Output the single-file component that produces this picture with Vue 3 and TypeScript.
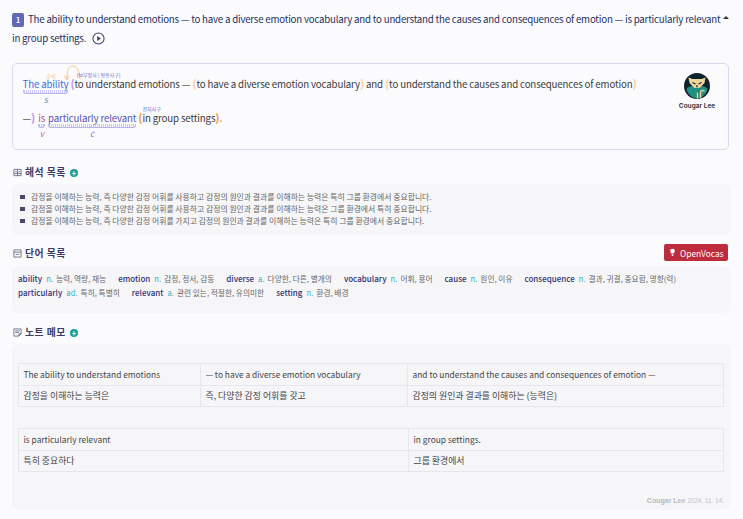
<script setup lang="ts">
const meanings: string[] = [
  '감정을 이해하는 능력, 즉 다양한 감정 어휘를 사용하고 감정의 원인과 결과를 이해하는 능력은 특히 그룹 환경에서 중요합니다.',
  '감정을 이해하는 능력, 즉 다양한 감정 어휘를 사용하고 감정의 원인과 결과를 이해하는 능력은 그룹 환경에서 특히 중요합니다.',
  '감정을 이해하는 능력, 즉 다양한 감정 어휘를 가지고 감정의 원인과 결과를 이해하는 능력은 특히 그룹 환경에서 중요합니다.',
]
interface Word { w: string; p: string; m: string }
const words: Word[] = [
  { w: 'ability', p: 'n.', m: '능력, 역량, 재능' },
  { w: 'emotion', p: 'n.', m: '감정, 정서, 감동' },
  { w: 'diverse', p: 'a.', m: '다양한, 다른, 별개의' },
  { w: 'vocabulary', p: 'n.', m: '어휘, 용어' },
  { w: 'cause', p: 'n.', m: '원인, 이유' },
  { w: 'consequence', p: 'n.', m: '결과, 귀결, 중요함, 영향(력)' },
  { w: 'particularly', p: 'ad.', m: '특히, 특별히' },
  { w: 'relevant', p: 'a.', m: '관련 있는, 적절한, 유의미한' },
  { w: 'setting', p: 'n.', m: '환경, 배경' },
]
</script>

<template>
  <div class="page">
    <header class="title">
      <p class="title-text">
        <span class="num">1</span>The ability to understand emotions — to have a diverse emotion vocabulary and to understand the causes and consequences of emotion — is particularly relevant in group settings.
        <svg class="play" viewBox="0 0 14 14" width="13" height="13"><circle cx="7" cy="7" r="6" fill="none" stroke="#3d4066" stroke-width="1.1" /><path d="M5.6 4.4 9.6 7l-4 2.6z" fill="#3d4066" /></svg>
      </p>
      <span class="caret"></span>
    </header>

    <section class="sentence">
      <div class="analysis">
        <span class="chunk subject">The ability<i class="role blue">S</i><em class="tag mod">수식</em>
          <svg class="arc" viewBox="0 0 18 18" width="18" height="18"><path d="M16 14C16 5 12 1 8.500 1 5 1 3 5 3 13" fill="none" stroke="#f8c58c" stroke-width="1" /><path d="M.5 10.500 3 15 5.500 10.500" fill="none" stroke="#f8c58c" stroke-width="1" /></svg>
        </span>
        <span class="br violet first">(</span><span class="tagged">to<em class="tag info">[to부정사 | 형용사구]</em></span> understand emotions — <span class="br peach">(</span>to have a diverse emotion vocabulary<span class="br peach">)</span> and <span class="br peach">(</span>to understand the causes and consequences of emotion<span class="br peach">)</span><br />
        —<span class="br violet">)</span> <span class="chunk verb">is<i class="role pink">V</i></span> <span class="chunk comp">particularly relevant<i class="role indigo">C</i></span> <span class="br orange">(</span><span class="tagged">in<em class="tag prep">전치사구</em></span> group settings<span class="br orange">)</span><span class="dot">.</span>
      </div>
      <div class="author">
        <svg class="avatar" viewBox="0 0 26 26" width="26" height="26">
          <circle cx="13" cy="13" r="13" fill="#0e2330" />
          <path d="M2.500 16C6 11 20 11 23.500 16 22 22 17 25.500 13 25.500 9 25.500 4 22 2.500 16z" fill="#1f8f80" />
          <path d="M4.500 4.500 8.500 6h9l4-1.500-1 5.500L15.500 15h-5L5.500 10z" fill="#f3d49a" />
          <path d="M8.500 9.500l3 1.500M17.500 9.500l-3 1.500M13 12v2.500" stroke="#0e2330" stroke-width="1.100" fill="none" />
          <path d="M16.500 25v-5.500c0-2 3-3 4-1M13.500 25.500v-6" stroke="#f3d49a" stroke-width="1.400" fill="none" />
        </svg>
        <span class="author-name">Cougar Lee</span>
      </div>
    </section>

    <div class="head">
      <svg viewBox="0 0 10 10" width="9" height="9" class="ico"><path d="M1 1.500h8v7H1zM5 1.500v7M2.500 4h1.500M6 4h1.500M1 6h8" fill="none" stroke="#4b4e6d" stroke-width=".8" /></svg>
      <h2>해석 목록</h2><span class="plus">+</span>
    </div>
    <ul class="panel meanings">
      <li v-for="(m, i) in meanings" :key="i">{{ m }}</li>
    </ul>

    <div class="head vocab-head">
      <svg viewBox="0 0 10 10" width="9" height="9" class="ico"><path d="M1 1h8v8H1zM1 3.500h8M3 6h4" fill="none" stroke="#4b4e6d" stroke-width=".8" /></svg>
      <h2>단어 목록</h2>
      <button class="open">
        <svg viewBox="0 0 10 12" width="7" height="9"><path d="M5 .5a3.400 3.400 0 0 1 3.400 3.400c0 1.500-1 2.300-1.600 3.400H3.200C2.600 6.200 1.600 5.400 1.600 3.900A3.400 3.400 0 0 1 5 .5zM3.500 8.500h3L5.800 11H4.200z" fill="#fff" /></svg>
        OpenVocas
      </button>
    </div>
    <div class="panel vocab">
      <span v-for="w in words" :key="w.w" class="word"><b>{{ w.w }}</b><i>{{ w.p }}</i><span>{{ w.m }}</span></span>
    </div>

    <div class="head note-head">
      <svg viewBox="0 0 10 10" width="9" height="9" class="ico"><path d="M1 1h8v5.500L6.500 9H1zM2.500 3.200h5M2.500 5h4M6.500 9V6.500H9" fill="none" stroke="#4b4e6d" stroke-width=".8" /></svg>
      <h2>노트 메모</h2><span class="plus">+</span>
    </div>
    <div class="panel notes">
      <table class="t1">
        <tbody>
          <tr><td class="c1">The ability to understand emotions</td><td class="c2">— to have a diverse emotion vocabulary</td><td>and to understand the causes and consequences of emotion —</td></tr>
          <tr class="ko"><td>감정을 이해하는 능력은</td><td>즉, 다양한 감정 어휘를 갖고</td><td>감정의 원인과 결과를 이해하는 (능력은)</td></tr>
        </tbody>
      </table>
      <table class="t2">
        <tbody>
          <tr><td class="c3">is particularly relevant</td><td>in group settings.</td></tr>
          <tr class="ko"><td>특히 중요하다</td><td>그룹 환경에서</td></tr>
        </tbody>
      </table>
      <p class="sign"><b>Cougar Lee</b> 2024. 11. 14.</p>
    </div>
  </div>
</template>

<style>
html, body { background: #fbfbfd; }
</style>

<style scoped>
.page {
  width: 743px;
  height: 519px;
  box-sizing: border-box;
  padding: 10px 13px 0 12px;
  overflow: hidden;
  font-family: "Noto Sans CJK KR", "Noto Sans", sans-serif;
  color: #333;
}
.title { position: relative; }
.title-text {
  margin: 0;
  width: 712px;
  font-size: 9.7px;
  letter-spacing: -.21px;
  line-height: 19px;
  color: #23305f;
}
.num {
  display: inline-block;
  width: 12px;
  height: 14px;
  margin-right: 4px;
  border-radius: 2px;
  background: #6169b5;
  color: #fff;
  font-size: 7px;
  font-weight: 700;
  line-height: 14px;
  text-align: center;
  vertical-align: 0;
}
.play { vertical-align: -3px; margin-left: 4px; }
.caret {
  position: absolute;
  right: 1px;
  top: 6px;
  border: 3px solid transparent;
  border-top: 0;
  border-bottom: 3px solid #333;
}
.sentence {
  display: flex;
  justify-content: space-between;
  box-sizing: border-box;
  width: 717px;
  height: 87px;
  margin-top: 15px;
  padding: 3px 12px 0 9.500px;
  border: 1px solid #d6dbf0;
  border-radius: 5px;
  background: #fbfbfe;
}
.analysis {
  width: 630px;
  font-size: 9.7px;
  letter-spacing: -.14px;
  line-height: 34px;
  color: #3a3a3a;
  white-space: nowrap;
}
.chunk { position: relative; display: inline-block; line-height: 14px; }
.chunk::after {
  content: "";
  position: absolute;
  left: 0;
  right: 0;
  bottom: -3px;
  height: 3px;
  border: 1px solid #b9b4ec;
  border-top: 0;
  border-radius: 0 0 3px 3px;
  background: repeating-linear-gradient(90deg, #c9c5f2 0 1px, transparent 1px 2px);
}
.subject { color: #3a6fe0; }
.verb { color: #c0527f; margin-left: 1px; }
.comp { color: #5551b0; margin-left: 1px; }
.role {
  position: absolute;
  left: 50%;
  top: 19px;
  transform: translateX(-50%);
  font-size: 7px;
  line-height: 9px;
}
.blue { color: #4b78d8; }
.pink { color: #c0527f; }
.indigo { color: #5c64b0; }
.br { font-size: 10.500px; font-weight: 900; line-height: 1; }
.violet { color: #c39af0; }
.first { margin-left: 2px; }
.peach { color: #fbd3a5; }
.orange { color: #f0a050; }
.dot { color: #f0a050; font-weight: 700; }
.tagged { position: relative; }
.tag {
  position: absolute;
  left: 0;
  top: -9px;
  font-style: normal;
  font-size: 5px;
  letter-spacing: 0;
  line-height: 7px;
  white-space: nowrap;
}
.mod { left: 24px; top: -5px; color: #f4bb7f; }
.info { left: 2px; color: #6b74c4; top: -6px; }
.prep { color: #4a6fc8; top: -6px; }
.arc { position: absolute; left: 41px; top: -12px; }
.author {
  display: flex;
  flex-direction: column;
  align-items: center;
  width: 38px;
  padding-top: 6px;
}
.avatar { display: block; }
.author-name {
  margin-top: 3px;
  font-size: 6.5px;
  line-height: 9px;
  font-weight: 700;
  white-space: nowrap;
  color: #444;
  font-family: "Inter", sans-serif;
}
.head {
  display: flex;
  align-items: center;
  height: 14px;
  margin-top: 15px;
  color: #3a3d63;
}
.ico { margin: 1px 3px 0 1px; }
h2 {
  margin: 0;
  font-size: 9.8px;
  font-weight: 700;
  letter-spacing: .5px;
  color: #3a3d63;
}
.plus {
  width: 8px;
  height: 8px;
  margin: 1px 0 0 4px;
  border-radius: 50%;
  background: #11a09a;
  color: #fff;
  font-size: 8px;
  font-weight: 700;
  line-height: 8px;
  text-align: center;
}
.panel {
  box-sizing: border-box;
  width: 718px;
  margin: 0;
  border-radius: 6px;
  background: #f6f6f9;
}
.meanings {
  height: 51px;
  margin-top: 5px;
  padding: 7px 0 0 8px;
  list-style: none;
}
.meanings li {
  position: relative;
  padding-left: 11px;
  font-size: 7.850px;
  line-height: 12px;
  color: #666;
}
.meanings li::before {
  content: "";
  position: absolute;
  left: 0;
  top: 3.500px;
  width: 4.500px;
  height: 4.500px;
  background: #494a6b;
}
.vocab-head { position: relative; margin-top: 11px; }
.open {
  position: absolute;
  right: 2px;
  top: -2px;
  display: flex;
  align-items: center;
  gap: 4px;
  height: 17px;
  width: 64px;
  padding: 0 0 0 5px;
  border: 0;
  border-radius: 2px;
  background: #bd2c3d;
  color: #fff;
  font: 8.400px "Noto Sans CJK KR", sans-serif;
}
.vocab {
  height: 47px;
  margin-top: 6px;
  padding: 6px 6px 0;
  font-size: 0;
}
.word {
  display: inline-block;
  margin-right: 12px;
  font-size: 7.700px;
  line-height: 13.500px;
  color: #666;
}
.word b { font-size: 8px; font-weight: 500; color: #2e3370; }
.word i { margin: 0 3px 0 4px; font-style: normal; color: #3ab0b8; }
.note-head { margin-top: 12px; }
.notes {
  position: relative;
  height: 166px;
  margin-top: 5px;
  padding: 19px 6px 0;
}
table {
  width: 706px;
  border-collapse: collapse;
  table-layout: fixed;
  font-size: 8.400px;
  color: #444;
}
.t2 { margin-top: 21px; }
td {
  height: 21.500px;
  padding: 0 4.500px;
  border: 1px solid #e6e6ec;
  box-sizing: border-box;
  white-space: nowrap;
}
.ko td { font-size: 8.900px; }
.c1 { width: 182px; }
.c2 { width: 207px; }
.c3 { width: 390px; }
.sign {
  position: absolute;
  right: 6px;
  bottom: 5px;
  margin: 0;
  font-family: "Liberation Sans", sans-serif;
  font-size: 6.400px;
  line-height: 9px;
  color: #c2c2c8;
}
.sign b { font-size: 7px; color: #b9b9c0; }
</style>
